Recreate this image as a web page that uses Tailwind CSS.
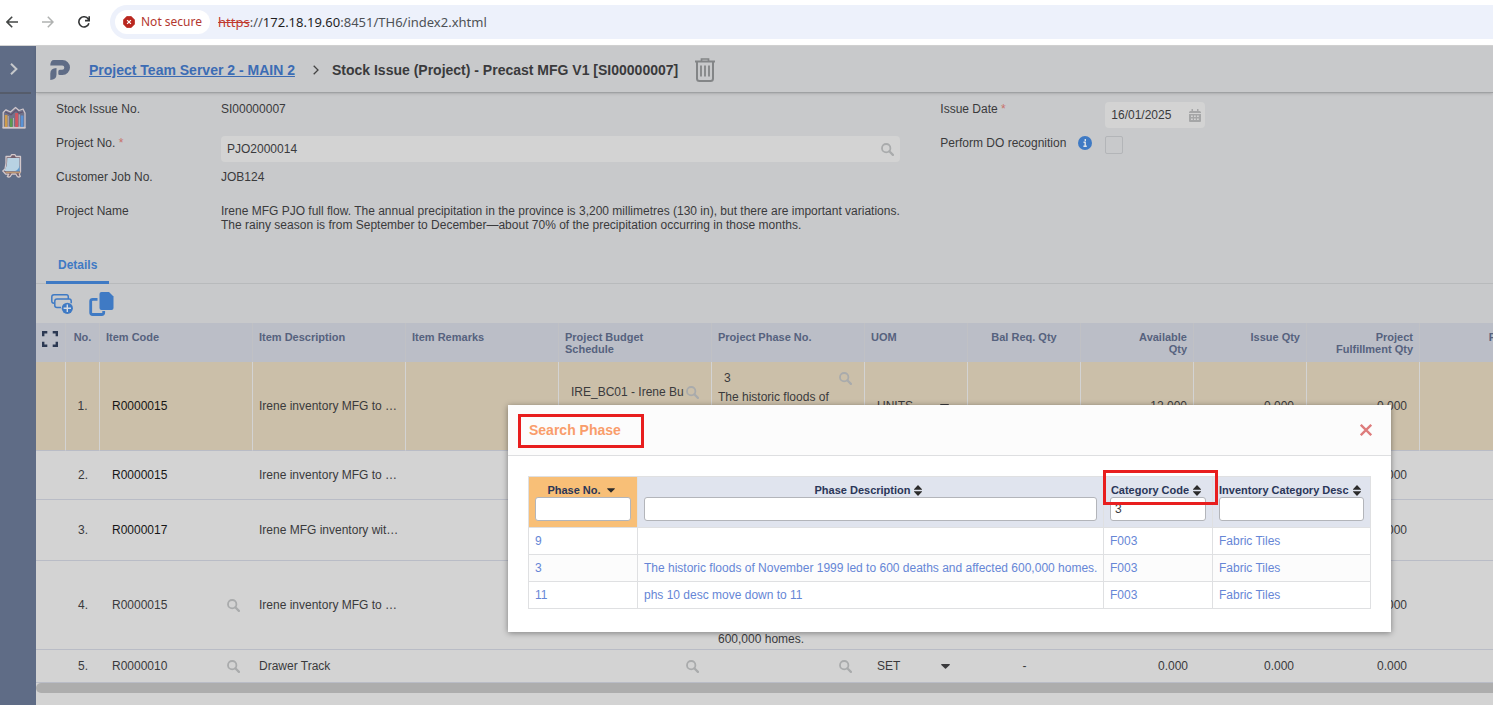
<!DOCTYPE html>
<html lang="en">
<head>
  <meta charset="UTF-8">
  <meta name="viewport" content="width=device-width, initial-scale=1.0">
  <title>Stock Issue (Project) - Precast MFG V1</title>
  <script src="https://cdn.jsdelivr.net/npm/@tailwindcss/browser@4"></script>
</head>
<body class="h-screen flex flex-col overflow-hidden bg-[#d3d3d3] font-['Liberation_Sans',Arial,sans-serif] text-[12px] leading-[14px] text-[#3a3a3c]">

  <!-- Shared icons -->
  <svg class="hidden">
    <symbol id="i-search" viewBox="0 0 13 13">
      <circle cx="5.2" cy="5.2" r="4.2" fill="none" stroke="currentColor" stroke-width="1.8"/>
      <path d="M8.3 8.3l3.6 3.6" stroke="currentColor" stroke-width="2.2" stroke-linecap="round"/>
    </symbol>
    <symbol id="i-caret" viewBox="0 0 9 5"><path d="M0.6 0h7.8q.8.2.3.9L5 4.6q-.5.5-1 0L.3.9Q-.1.2.6 0z" fill="currentColor"/></symbol>
    <symbol id="i-sort" viewBox="0 0 8 11"><path d="M4 0l4 4.3v.5H0v-.5zM4 11l4-4.3v-.5H0v.5z" fill="currentColor"/></symbol>
  </svg>

  <!-- Browser bar -->
  <div class="shrink-0 h-[46px] flex items-center bg-white border-b border-[#d4d4d4] pl-1.5 pb-0.5 font-['Noto_Sans','Open_Sans',sans-serif] text-[13px] leading-4">
    <button type="button" aria-label="Back" class="w-3 mr-6">
      <svg class="w-3 h-3" viewBox="0 0 12 12" fill="none" stroke="#444746" stroke-width="1.6"><path d="M12 6H1M6.2.8L1 6l5.2 5.2"/></svg>
    </button>
    <button type="button" aria-label="Forward" class="w-3 mr-6">
      <svg class="w-3 h-3" viewBox="0 0 12 12" fill="none" stroke="#b0b2b1" stroke-width="1.5"><path d="M0 6h11M5.8.8L11 6l-5.2 5.2"/></svg>
    </button>
    <button type="button" aria-label="Reload" class="w-3 mr-5">
      <svg class="w-3 h-3" viewBox="0 0 12 12" fill="none" stroke="#333536" stroke-width="1.6"><path d="M10.9 7.2A5.1 5.1 0 1 1 10.3 3.2L11 4.4M11.2.3v4.3H7"/></svg>
    </button>
    <div class="flex-1 h-[34px] rounded-l-full bg-[#edf1fb] flex items-center pl-[5px]">
      <button type="button" class="h-6 rounded-full bg-white flex items-center gap-1.5 px-2 text-[#b3372f] text-[12px]">
        <svg class="w-3 h-3" viewBox="0 0 12 12"><path d="M3.9.3h4.2l3.6 3.6v4.2l-3.6 3.6H3.900L.3 8.100V3.900z" fill="#b9271f" stroke="#b9271f" stroke-width=".6" stroke-linejoin="round"/><path d="M4.1 4.1l3.8 3.8M7.9 4.1L4.1 7.9" stroke="#fff" stroke-width="1.3"/></svg>
        Not secure
      </button>
      <div class="pl-2 text-[#4d5156]"><s class="text-[#c0392f]">https</s>://<span class="text-[#1f1f1f]">172.18.19.60</span>:8451/TH6/index2.xhtml</div>
    </div>
  </div>

  <div class="flex-1 flex min-h-0">
    <!-- Side menu -->
    <nav class="shrink-0 w-9 bg-[#5f6c86] flex flex-col">
      <button type="button" aria-label="Expand menu" class="h-12 w-[31px] pl-2.5 border-b-2 border-[#555c6b]">
        <svg class="w-2 h-3" viewBox="0 0 8 12" fill="none" stroke="#c6c8cb" stroke-width="2"><path d="M1 .8L6.4 6 1 11.2"/></svg>
      </button>
      <a href="#" aria-label="Reports" class="mt-3 ml-0.5">
        <svg class="w-6 h-6" viewBox="0 0 24 24">
          <path d="M1.200 21.500V6.500L4 3.800 8.500 6 13.500 1.500 17 4.500l4-1.500 2 4v14.500z" fill="#70738a" stroke="#cfc6cb" stroke-width="1.300" stroke-linejoin="round"/>
          <path d="M3 5.800l6 3L14 4.200l3 3 4-1.400" fill="none" stroke="#5f5470" stroke-width="1.200"/>
          <rect x="2.800" y="9" width="2.700" height="12" fill="#cf9c4c"/><rect x="8" y="12.500" width="2.500" height="8.500" fill="#5c9a4e"/>
          <rect x="13.200" y="7" width="3" height="14" fill="#cf5660"/><rect x="18.700" y="9.500" width="2.700" height="11.500" fill="#5a93d6"/>
          <path d="M6.300 10v11M11.500 12v9M17.300 8.500v12.500" stroke="#c8c0c7" stroke-width=".7"/>
          <path d="M.5 21.800h23" stroke="#d2c9cb" stroke-width="1.500"/>
        </svg>
      </a>
      <a href="#" aria-label="Board" class="mt-6 ml-0.5">
        <svg class="w-6 h-6" viewBox="0 0 24 24">
          <path d="M3 15l-2.200 2 3 3.200h3l-1.500 2.300q1.500 1 3 0l1.500-2.500h4l1.500 2.500q1.500 1 3 0l-1-2.500 1.200-2V2.500H14l-1-1.800h-3.500L8.500 2.500H4V9z" fill="#735f6c" stroke="#d3c8cb" stroke-width="1.300" stroke-linejoin="round"/>
          <path d="M5.300 4h12.200v13.300H4.200q-1.700 0-2-1.300 3-1.500 3.100-12z" fill="#b8d2e3"/>
          <path d="M12.500 17.300q4.200-1 5-6v6z" fill="#5b97cd"/>
          <path d="M3.500 18.500h15" stroke="#bd9670" stroke-width="1.500"/>
        </svg>
      </a>
    </nav>

    <main class="flex-1 min-w-0 flex flex-col">
      <!-- Title bar -->
      <header class="shrink-0 h-[47px] flex items-center bg-[#c8c9cb] border-b border-[#9fa1a3] shadow-sm pl-3.5 pt-0.5 text-[14px] leading-[18px] font-bold relative">
        <svg class="w-5 h-5 mr-[19px]" viewBox="0 0 20 20" fill="#5f6c86">
          <path d="M4 0H12.500a7.500 7.500 0 0 1 0 15H9.500q-1.200 0-1.200-1.200v-2.300q0-1.700 1.500-1.700h2.400a2 2 0 0 0 0-4.200H.3Q.3 0 4 0z"/>
          <path d="M6.500 8V14.500q0 5-6.200 5.500v-6.500Q.3 8.300 6.500 8z"/>
        </svg>
        <a href="#" class="text-[#3c6cb4] underline">Project Team Server 2 - MAIN 2</a>
        <svg class="w-1.5 h-2.5 ml-[18px] mr-[13px]" viewBox="0 0 6 10" fill="none" stroke="#444" stroke-width="1.300"><path d="M.7.700L5 5 .7 9.300"/></svg>
        <h1>Stock Issue (Project) - Precast MFG V1 [SI00000007]</h1>
        <button type="button" aria-label="Delete" class="ml-[17px]">
          <svg class="w-5 h-6" viewBox="0 0 20 24" fill="none" stroke="#838587">
            <path d="M0 3.500h20" stroke-width="2"/><path d="M6.500 3V1h7v2" stroke-width="1.700"/>
            <path d="M2 4v16.500q0 2.500 2.500 2.500h11q2.500 0 2.500-2.500V4" stroke-width="2"/>
            <path d="M6 7.500v11M10 7.500v11M14 7.500v11" stroke-width="1.800"/>
          </svg>
        </button>
      </header>

      <!-- Form -->
      <form class="shrink-0 bg-[#c8c9cb]">
        <div class="grid grid-cols-[8fr_5fr] pl-5 pt-[9px]">
          <div class="grid grid-cols-[165px_1fr] auto-rows-[minmax(26px,auto)] gap-y-2 pr-10">
            <span>Stock Issue No.</span><span>SI00000007</span>
            <label for="project-no">Project No. <span class="text-[#c8716b]">*</span></label>
            <div class="h-[26px] rounded bg-[#d3d3d3] flex items-center pr-1.5">
              <input id="project-no" type="text" value="PJO2000014" class="flex-1 min-w-0 h-full pl-1.5 outline-none">
              <svg class="w-[13px] h-[13px] text-[#a9abac]"><use href="#i-search"/></svg>
            </div>
            <span>Customer Job No.</span><span>JOB124</span>
            <span>Project Name</span>
            <p>Irene MFG PJO full flow. The annual precipitation in the province is 3,200 millimetres (130 in), but there are important variations.<br>The rainy season is from September to December—about 70% of the precipitation occurring in those months.</p>
          </div>
          <div class="grid grid-cols-[165px_1fr] auto-rows-[26px] gap-y-2 content-start">
            <label for="issue-date">Issue Date <span class="text-[#c8716b]">*</span></label>
            <div class="w-[100px] h-[26px] rounded bg-[#d3d3d3] flex items-center pr-1">
              <input id="issue-date" type="text" value="16/01/2025" class="flex-1 min-w-0 h-full pl-1.5 outline-none">
              <svg class="w-3 h-[13px]" viewBox="0 0 12 13"><path d="M1.500 2h9Q12 2 12 3.500V4H0v-.5Q0 2 1.500 2zM0 5h12v7q0 1-1 1H1q-1 0-1-1zM2.500 0h1.500v3H2.500zM8 0h1.500v3H8z" fill="#a5a6a7"/><path d="M2 7.300h8M2 10.300h8" stroke="#d3d3d3" stroke-width="1.400" stroke-dasharray="1.800 1.200"/></svg>
            </div>
            <div class="flex gap-3 items-start">
              <label for="do-rec">Perform DO recognition</label>
              <svg class="w-3.5 h-3.5" viewBox="0 0 14 14"><circle cx="7" cy="7" r="7" fill="#3f7ac4"/><path d="M7.300 3v1.900M5.500 6.300h1.700v4M5.400 10.200h3.400" stroke="#dfe3e8" stroke-width="1.400" fill="none"/></svg>
            </div>
            <input id="do-rec" type="checkbox" class="appearance-none w-[18px] h-[18px] rounded-xs border border-[#b3b5b8]">
          </div>
        </div>

        <div class="mt-[15px] pl-2.5 border-b border-[#b8babc]">
          <button type="button" class="h-[37px] px-3 pt-0.5 border-b-3 border-[#3f7ac4] text-[#3f7ac4] font-bold -mb-px">Details</button>
        </div>
        <div class="h-[39px] flex items-center gap-4 pl-[15px]">
          <button type="button" aria-label="Add rows">
            <svg class="w-[22px] h-5" viewBox="0 0 22 20" fill="none" stroke="#3f7ac4" stroke-width="1.500">
              <path d="M3 9.200Q.8 9.200.8 7V3Q.8.800 3 .8h12.500Q17.300.800 17.300 3v2"/>
              <path d="M10 13.500H6Q3.800 13.500 3.800 11.500V7.200Q3.800 5 6 5h12.200q2 0 2 2.200v2"/>
              <circle cx="16.300" cy="14.300" r="5.600" fill="#3f7ac4" stroke="none"/><path d="M16.300 10.600v7.400M12.600 14.300H20" stroke="#d5dae2" stroke-width="1.400"/>
            </svg>
          </button>
          <button type="button" aria-label="Copy">
            <svg class="w-[25px] h-6" viewBox="0 0 25 24">
              <path d="M12.500 0H20l4.500 4.500V16q0 2-2 2h-10q-2 0-2-2V2q0-2 2-2z" fill="#3f7ac4"/>
              <path d="M8.500 7.300H3.700q-2 0-2 2v11.200q0 2 2 2h9q2 0 2-2V19" fill="none" stroke="#3f7ac4" stroke-width="2.800"/>
            </svg>
          </button>
        </div>
      </form>

      <!-- Item lines -->
      <div class="shrink-0 overflow-hidden">
        <table class="table-fixed w-[1497px] border-separate border-spacing-0 [&_td]:px-1.5 [&_td]:border-b [&_td]:border-[#b9bcc6] [&_th]:px-1.5 [&_th]:border-r [&_th]:border-[#c0c1c5]">
          <colgroup>
            <col class="w-[30px]"><col class="w-[34px]"><col class="w-[153px]"><col class="w-[153px]"><col class="w-[153px]"><col class="w-[153px]"><col class="w-[153px]"><col class="w-[103px]"><col class="w-[113px]"><col class="w-[113px]"><col class="w-[113px]"><col class="w-[113px]"><col class="w-[113px]">
          </colgroup>
          <thead class="bg-[#bbbec7] text-[#56627e] text-[11px] leading-3 text-left align-top">
            <tr class="h-[39px] [&>th]:pt-2">
              <th><button type="button" aria-label="Full screen" class="block"><svg class="w-4 h-4" viewBox="0 0 16 16" fill="none" stroke="#2b3852" stroke-width="2.400"><path d="M1.200 5.300V1.200h4.100M10.700 1.200h4.100v4.100M14.800 10.700v4.100h-4.100M5.300 14.800H1.200v-4.100"/></svg></button></th>
              <th class="text-center">No.</th><th>Item Code</th><th>Item Description</th><th>Item Remarks</th>
              <th>Project Budget<br>Schedule</th><th>Project Phase No.</th><th>UOM</th><th class="text-center">Bal Req. Qty</th>
              <th class="text-right">Available<br>Qty</th><th class="text-right">Issue Qty</th><th class="text-right">Project<br>Fulfillment Qty</th><th class="text-right">Project</th>
            </tr>
          </thead>
          <tbody>
            <tr class="h-[89px] bg-[#cbbfa9] [&>td]:border-r [&>td]:border-r-[#d3d3d3]">
              <td></td><td class="text-center">1.</td>
              <td class="text-[#161616]"><span class="pl-1.5">R0000015</span></td>
              <td>Irene inventory MFG to …</td><td></td>
              <td>
                <div class="flex items-center h-6 mb-7">
                  <input type="text" aria-label="Budget schedule" value="IRE_BC01 - Irene Bu" class="flex-1 min-w-0 pl-1.5 outline-none">
                  <svg class="w-[13px] h-[13px] mr-1.5 text-[#a9abac]"><use href="#i-search"/></svg>
                </div>
              </td>
              <td>
                <div class="flex items-center h-6">
                  <input type="text" aria-label="Phase no" value="3" class="flex-1 min-w-0 pl-1.5 outline-none">
                  <svg class="w-[13px] h-[13px] mr-1.5 text-[#a9abac]"><use href="#i-search"/></svg>
                </div>
                The historic floods of November 1999 led to 600 deaths and affected 600,000 homes.
              </td>
              <td>
                <div class="flex items-center pr-3">
                  <select aria-label="UOM" class="appearance-none flex-1 min-w-0 pl-1.5 outline-none"><option>UNITS</option></select>
                  <svg class="w-[9px] h-[5px]"><use href="#i-caret"/></svg>
                </div>
              </td>
              <td></td><td class="text-right">12.000</td>
              <td><input type="text" aria-label="Issue qty" value="0.000" class="w-full pr-1.5 text-right outline-none"></td>
              <td><input type="text" aria-label="Fulfillment qty" value="0.000" class="w-full pr-1.5 text-right outline-none"></td>
              <td></td>
            </tr>
            <tr class="h-[49px]">
              <td></td><td class="text-center">2.</td>
              <td class="text-[#161616]"><span class="pl-1.5">R0000015</span></td>
              <td>Irene inventory MFG to …</td><td></td><td></td><td></td><td></td><td></td><td></td><td></td>
              <td><input type="text" aria-label="Fulfillment qty" value="0.000" class="w-full pr-[7px] text-right outline-none"></td>
              <td></td>
            </tr>
            <tr class="h-[61px]">
              <td></td><td class="text-center">3.</td>
              <td class="text-[#161616]"><span class="pl-1.5">R0000017</span></td>
              <td>Irene MFG inventory wit…</td><td></td><td></td><td></td><td></td><td></td><td></td><td></td>
              <td><input type="text" aria-label="Fulfillment qty" value="0.000" class="w-full pr-[7px] text-right outline-none"></td>
              <td></td>
            </tr>
            <tr class="h-[89px]">
              <td></td><td class="text-center">4.</td>
              <td>
                <div class="flex items-center">
                  <input type="text" aria-label="Item code" value="R0000015" class="flex-1 min-w-0 pl-1.5 outline-none">
                  <svg class="w-[13px] h-[13px] mr-[7px] text-[#a9abac]"><use href="#i-search"/></svg>
                </div>
              </td>
              <td>Irene inventory MFG to …</td><td></td><td></td>
              <td class="pt-0.5">
                <div class="h-6"></div>
                The historic floods of November 1999 led to 600 deaths and affected 600,000 homes.
              </td>
              <td></td><td></td><td></td><td></td>
              <td><input type="text" aria-label="Fulfillment qty" value="0.000" class="w-full pr-[7px] text-right outline-none"></td>
              <td></td>
            </tr>
            <tr class="h-[33px]">
              <td></td><td class="text-center">5.</td>
              <td>
                <div class="flex items-center">
                  <input type="text" aria-label="Item code" value="R0000010" class="flex-1 min-w-0 pl-1.5 outline-none">
                  <svg class="w-[13px] h-[13px] mr-[7px] text-[#a9abac]"><use href="#i-search"/></svg>
                </div>
              </td>
              <td>Drawer Track</td><td></td>
              <td><svg class="w-[13px] h-[13px] mr-[7px] ml-auto text-[#a9abac]"><use href="#i-search"/></svg></td>
              <td><svg class="w-[13px] h-[13px] mr-[7px] ml-auto text-[#a9abac]"><use href="#i-search"/></svg></td>
              <td>
                <div class="flex items-center pr-3">
                  <select aria-label="UOM" class="appearance-none flex-1 min-w-0 pl-1.5 outline-none"><option>SET</option></select>
                  <svg class="w-[9px] h-[5px]"><use href="#i-caret"/></svg>
                </div>
              </td>
              <td class="text-center">-</td><td class="text-right">0.000</td>
              <td><input type="text" aria-label="Issue qty" value="0.000" class="w-full pr-[7px] text-right outline-none"></td>
              <td><input type="text" aria-label="Fulfillment qty" value="0.000" class="w-full pr-[7px] text-right outline-none"></td>
              <td></td>
            </tr>
          </tbody>
        </table>
        <div class="h-2.5 rounded-l-full bg-[#adadad]"></div>
      </div>
    </main>
  </div>

  <!-- Search Phase dialog -->
  <div role="dialog" aria-labelledby="dlg-title" class="absolute left-[508px] top-[405px] w-[883px] bg-white shadow-[0_1px_6px_rgba(0,0,0,0.4)]">
    <div class="h-[51px] flex items-center justify-between bg-[#fcfcfc] border-b border-[#dedfe1] pl-[21px] pr-[19px]">
      <h2 id="dlg-title" class="text-[14px] leading-[18px] font-bold text-[#f99d6b]">Search Phase</h2>
      <button type="button" aria-label="Close">
        <svg class="w-3 h-3" viewBox="0 0 12 12" stroke="#de7c7c" stroke-width="2.300"><path d="M.8.800l10.400 10.400M11.200.800L.8 11.200"/></svg>
      </button>
    </div>
    <div class="px-5 pt-5 pb-[23px]">
      <table class="table-fixed w-full border-collapse [&_td]:border [&_td]:border-[#dfe0e2] [&_td]:px-1.5 [&_th]:border [&_th]:border-[#dfe0e2] [&_th]:p-1.5 [&_input]:block [&_input]:w-full [&_input]:h-6 [&_input]:px-1 [&_input]:bg-white [&_input]:border [&_input]:border-[#b3b5ba] [&_input]:rounded-[3px] [&_input]:font-normal [&_input]:text-[12px] [&_input]:text-[#3a3a3c]">
        <colgroup><col class="w-[109px]"><col><col class="w-[109px]"><col class="w-[158px]"></colgroup>
        <thead class="bg-[#e0e4ee] text-[#2a3658] text-[11px] leading-[14px] whitespace-nowrap">
          <tr>
            <th class="bg-[#f8bf77]">
              <label for="f-no" class="flex items-center justify-center gap-1.5 pr-1">Phase No. <svg class="w-2 h-[5px] text-[#2b2b2b]"><use href="#i-caret"/></svg></label>
              <input id="f-no" type="text">
            </th>
            <th>
              <label for="f-desc" class="flex items-center justify-center gap-1 pr-1">Phase Description <svg class="w-2 h-[11px] text-[#2b2b2b]"><use href="#i-sort"/></svg></label>
              <input id="f-desc" type="text">
            </th>
            <th>
              <label for="f-cat" class="flex items-center justify-center gap-1 pr-1">Category Code <svg class="w-2 h-[11px] text-[#2b2b2b]"><use href="#i-sort"/></svg></label>
              <input id="f-cat" type="text" value="3">
            </th>
            <th>
              <label for="f-inv" class="flex items-center gap-1">Inventory Category Desc <svg class="w-2 h-[11px] text-[#2b2b2b]"><use href="#i-sort"/></svg></label>
              <input id="f-inv" type="text">
            </th>
          </tr>
        </thead>
        <tbody class="text-[#6686d6]">
          <tr class="h-[27px]"><td><a href="#">9</a></td><td></td><td><a href="#">F003</a></td><td><a href="#">Fabric Tiles</a></td></tr>
          <tr class="h-[27px] bg-[#fcfcfc]"><td><a href="#">3</a></td><td class="whitespace-nowrap"><a href="#">The historic floods of November 1999 led to 600 deaths and affected 600,000 homes.</a></td><td><a href="#">F003</a></td><td><a href="#">Fabric Tiles</a></td></tr>
          <tr class="h-[27px]"><td><a href="#">11</a></td><td><a href="#">phs 10 desc move down to 11</a></td><td><a href="#">F003</a></td><td><a href="#">Fabric Tiles</a></td></tr>
        </tbody>
      </table>
    </div>
    <!-- Red highlight boxes -->
    <div class="absolute left-2.5 top-[9px] w-[126px] h-[34px] border-3 border-[#e81e1e]"></div>
    <div class="absolute left-[595px] top-[65px] w-[115px] h-[35px] border-3 border-[#e81e1e]"></div>
  </div>
</body>
</html>
